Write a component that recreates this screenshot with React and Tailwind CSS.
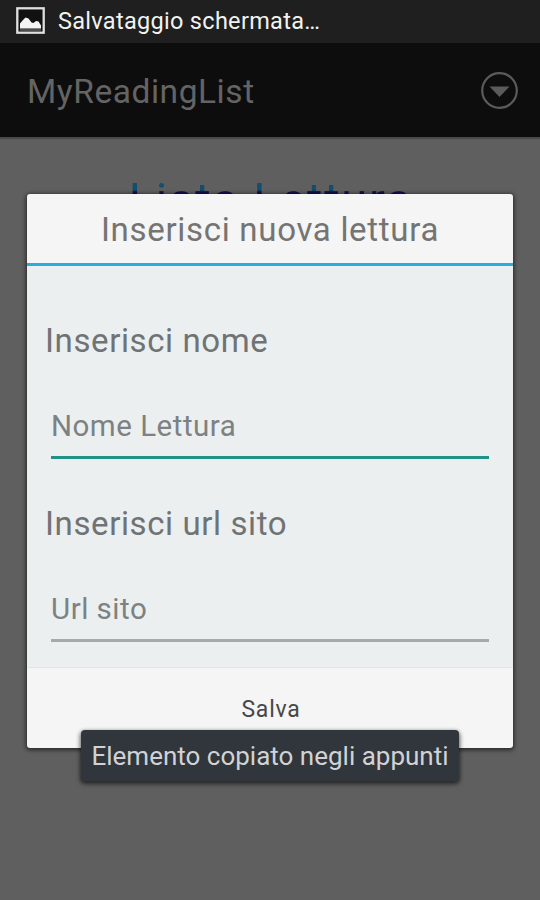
import React from 'react';

function StatusBar() {
  return (
    <div className="flex h-[43px] items-start bg-[#1f1f1f] pl-4">
      <svg className="mt-[7px] shrink-0" width="29" height="28" viewBox="0 0 29 28">
        <rect x="1.3" y="1.3" width="26.400" height="24.400" fill="#111" stroke="#e0e0e0" strokeWidth="2.300" />
        <path d="M4 21.500v-5l3-3.500 2.500-2.500 3 1 3 4 2 .5 2.500-2 2.500.5 2.500 4v3z" fill="#f4f4f4" />
        <path d="M4 23h21" stroke="#8a8a8a" strokeWidth="1" />
      </svg>
      <span className="ml-[13px] text-[23.5px] leading-[42px] tracking-[0.3px] whitespace-nowrap text-[#f2f2f2]">
        Salvataggio schermata…
      </span>
    </div>
  );
}

function ActionBar() {
  return (
    <div className="flex h-[94px] items-center justify-between bg-[#0d0d0d] pr-[21px] pl-[27px]">
      <span className="pt-[3px] text-[33.5px] leading-[40px] tracking-[0.55px] whitespace-nowrap text-[#646464]">MyReadingList</span>
      <svg width="40" height="40" viewBox="0 0 40 40">
        <circle cx="20.500" cy="20.500" r="17.300" fill="none" stroke="#5b5b5b" strokeWidth="2.200" />
        <path d="M10.500 16.500h20l-10 10.500z" fill="#5b5b5b" />
      </svg>
    </div>
  );
}

function Field({ label, placeholder, line }) {
  return (
    <div className="h-[183px]">
      <div className="pl-[18px] text-[33px] leading-[40px] tracking-[0.6px] whitespace-nowrap text-[#707374]">
        {label}
      </div>
      <div className="mt-[45px] ml-[24px] w-[438px]">
        <div className="text-[29.5px] leading-[40px] tracking-[0.5px] whitespace-nowrap text-[#7e8182]">
          {placeholder}
        </div>
        <div className={`mt-[10px] h-[3px] ${line}`} />
      </div>
    </div>
  );
}

function Dialog() {
  return (
    <div className="absolute top-[194px] left-[27px] flex h-[554px] w-[486px] flex-col overflow-hidden rounded-[3px] bg-[#f5f5f5] shadow-[0_1px_4px_1px_rgba(0,0,0,0.6)]">
      <div className="h-[69px] pt-[16px] text-center text-[33px] leading-[40px] tracking-[0.7px] whitespace-nowrap text-[#747474]">
        Inserisci nuova lettura
      </div>
      <div className="h-[3px] bg-[#26aedd]" />
      <div className="h-[401px] overflow-hidden bg-[#ebeff0] pt-[55px]">
        <Field label="Inserisci nome" placeholder="Nome Lettura" line="bg-[#1f9285]" />
        <Field label="Inserisci url sito" placeholder="Url sito" line="bg-[#a6aaaa]" />
      </div>
      <button className="h-[81px] border-t border-[#e2e5e6] pt-[5px] pl-[2px] text-[23px] tracking-[0.8px] text-[#484848]">Salva</button>
    </div>
  );
}

export default function App() {
  return (
    <div className="relative h-[900px] w-[540px] overflow-hidden bg-[#5f5f5f] font-['Roboto','Liberation_Sans',sans-serif]">
      <StatusBar />
      <ActionBar />
      <div className="h-[2px] bg-[#4a4a4a]" />
      <h1 className="mt-[34px] bg-[linear-gradient(to_bottom,#104f70_0,#104f70_17px,#10104f_19px)] bg-clip-text pl-[2px] text-center text-[47px] leading-[54px] tracking-[1.8px] text-transparent">
        Lista Lettura
      </h1>
      <Dialog />
      <div className="absolute top-[730px] left-[81px] flex h-[51px] w-[378px] items-center justify-center rounded-[4px] bg-[#30363c] pt-[1px] text-[26px] whitespace-nowrap text-[#d0d2d4] shadow-[0_2px_4px_1px_rgba(0,0,0,0.6)]">
        Elemento copiato negli appunti
      </div>
    </div>
  );
}
